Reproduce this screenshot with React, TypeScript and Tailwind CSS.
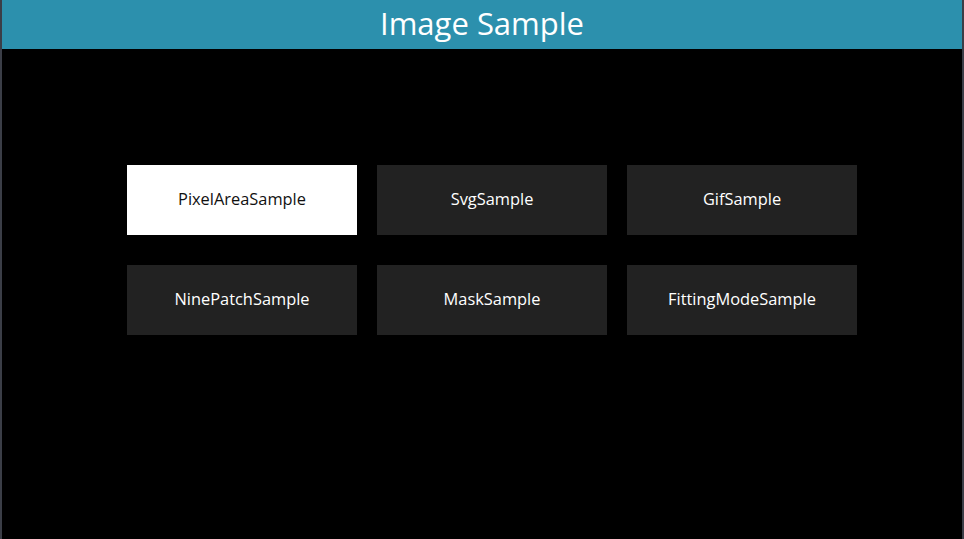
import React from "react";

const items = [
  "PixelAreaSample",
  "SvgSample",
  "GifSample",
  "NinePatchSample",
  "MaskSample",
  "FittingModeSample",
];

export default function App() {
  return (
    <div
      className="w-[964px] h-[539px] bg-black border-x-2 border-[#3b3e47] flex flex-col overflow-hidden"
      style={{ fontFamily: '"Open Sans", "Noto Sans", sans-serif' }}
    >
      <div className="h-[49px] bg-[#2c90ad] flex items-center justify-center shrink-0">
        <span className="text-white text-[31px] leading-none pb-[3px]">Image Sample</span>
      </div>
      <div className="pl-[125px] pt-[116px]">
        <div className="grid grid-cols-[230px_230px_230px] gap-x-[20px] gap-y-[30px]">
          {items.map((t, i) => (
            <div
              key={t}
              className={
                i === 0
                  ? "h-[70px] bg-white text-[#111] flex items-center justify-center text-[16.4px] pb-[2px]"
                  : "h-[70px] bg-[#222222] text-white flex items-center justify-center text-[16.4px] pb-[2px]"
              }
            >
              {t}
            </div>
          ))}
        </div>
      </div>
    </div>
  );
}
